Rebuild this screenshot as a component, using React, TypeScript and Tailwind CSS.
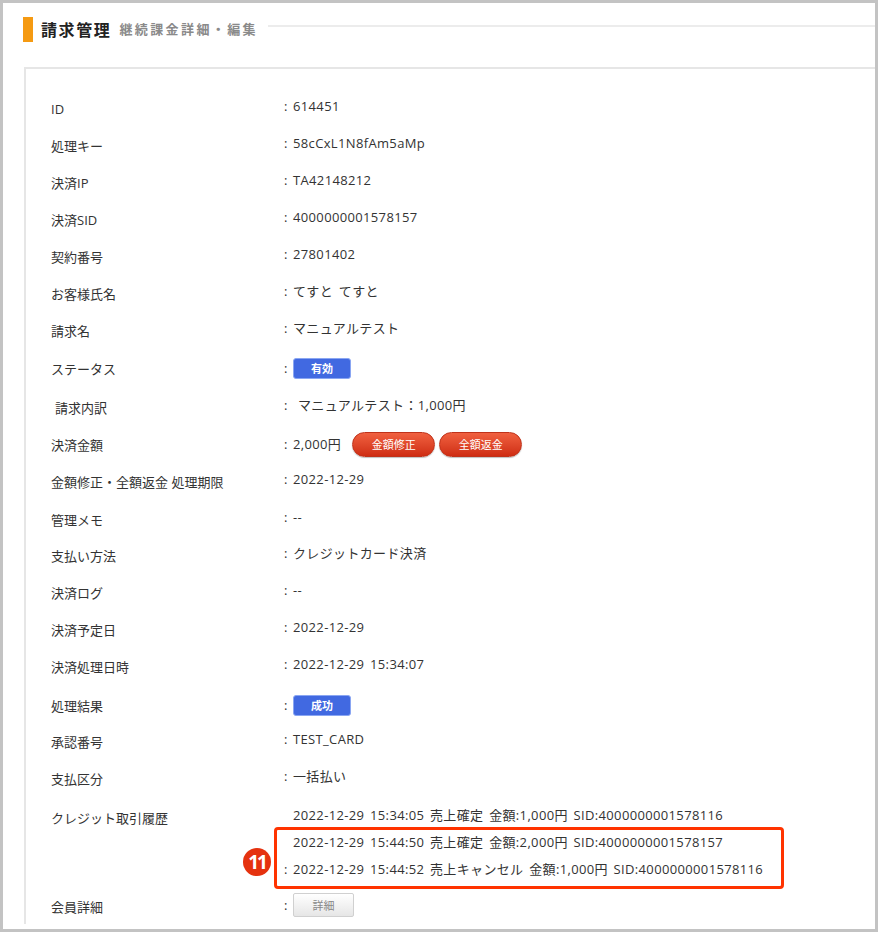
import React from "react";

/* =========================
   Types
========================= */

type RowProps = {
  label: string;
  children: React.ReactNode;
  rowClass?: string;
  labelClass?: string;
};

/* =========================
   Small parts
========================= */

function Row({
  label,
  children,
  rowClass = "pt-[10px] pb-[7px]",
  labelClass = "pt-[3px]",
}: RowProps) {
  return (
    <div className={`flex items-start ${rowClass}`}>
      <div className={`w-[233px] shrink-0 leading-[17px] ${labelClass}`}>
        {label}
      </div>
      <div className="flex-1 leading-[17px] tracking-[0.35px] [word-spacing:2px]">
        {children}
      </div>
    </div>
  );
}

function Colon() {
  return <span className="inline-block w-[9px]">:</span>;
}

function Text({ children }: { children: React.ReactNode }) {
  return (
    <div className="flex">
      <Colon />
      <span>{children}</span>
    </div>
  );
}

function BlueBadge({ children }: { children: React.ReactNode }) {
  return (
    <div className="flex items-center">
      <Colon />
      <span className="inline-flex h-[21px] w-[58px] items-center justify-center rounded-[3px] border border-[#8aa6f2] bg-[#4169e1] text-[11px] font-bold tracking-normal text-white">
        {children}
      </span>
    </div>
  );
}

function RedButton({ children }: { children: React.ReactNode }) {
  return (
    <span className="inline-flex h-[25px] w-[83px] items-center justify-center rounded-full border border-[#c0321a] bg-gradient-to-b from-[#f0603f] to-[#cf2c12] text-[11px] tracking-normal text-white shadow-[0_1px_1px_rgba(0,0,0,0.25)]">
      {children}
    </span>
  );
}

/* =========================
   Data
========================= */

const history = [
  "2022-12-29 15:34:05 売上確定 金額:1,000円 SID:4000000001578116",
  "2022-12-29 15:44:50 売上確定 金額:2,000円 SID:4000000001578157",
  "2022-12-29 15:44:52 売上キャンセル 金額:1,000円 SID:4000000001578116",
];

/* =========================
   Component
========================= */

export default function App() {
  return (
    <div
      className="relative h-[932px] w-[878px] overflow-hidden border-[3px] border-[#c3c3c3] bg-white text-[13px] text-[#333]"
      style={{ fontFamily: '"Open Sans", "Noto Sans CJK JP", sans-serif' }}
    >
      {/* Header */}
      <div className="flex items-center pl-[20px] pt-[14px]">
        <div className="h-[25px] w-[10px] bg-[#f59a12]" />
        <div className="ml-[8px] text-[16px] font-bold tracking-[1.6px] text-[#222]">
          請求管理
        </div>
        <div className="ml-[8px] text-[13px] font-bold tracking-[2.4px] text-[#8a8a8a]">
          継続課金詳細・編集
        </div>
        <div className="mb-[7px] ml-[10px] h-[2px] flex-1 bg-[#ececec]" />
      </div>

      {/* Card */}
      <div className="ml-[21px] mt-[25px] w-[900px] border-l-2 border-t-2 border-[#e6e6e6] pl-[25px] pt-[19px]">
        <Row label="ID">
          <Text>614451</Text>
        </Row>
        <Row label="処理キー">
          <Text>58cCxL1N8fAm5aMp</Text>
        </Row>
        <Row label="決済IP">
          <Text>TA42148212</Text>
        </Row>
        <Row label="決済SID">
          <Text>4000000001578157</Text>
        </Row>
        <Row label="契約番号">
          <Text>27801402</Text>
        </Row>
        <Row label="お客様氏名">
          <Text>てすと てすと</Text>
        </Row>
        <Row label="請求名" rowClass="pt-[10px] pb-[8px]">
          <Text>マニュアルテスト</Text>
        </Row>
        <Row label="ステータス" rowClass="pt-[10px] pb-[8px]">
          <BlueBadge>有効</BlueBadge>
        </Row>
        <Row label="請求内訳" labelClass="pt-[3px] pl-[4px]">
          <div className="flex">
            <span className="inline-block w-[14px]">:</span>
            <span>マニュアルテスト：1,000円</span>
          </div>
        </Row>
        <Row
          label="決済金額"
          rowClass="pt-[8px] pb-[4px]"
          labelClass="pt-[5px]"
        >
          <div className="flex items-center">
            <Colon />
            <span className="mr-[11px]">2,000円</span>
            <div className="flex gap-[4px]">
              <RedButton>金額修正</RedButton>
              <RedButton>全額返金</RedButton>
            </div>
          </div>
        </Row>
        <Row label="金額修正・全額返金 処理期限" rowClass="pt-[10px] pb-[8px]">
          <Text>2022-12-29</Text>
        </Row>
        <Row label="管理メモ" rowClass="pt-[10px] pb-[6px]">
          <Text>--</Text>
        </Row>
        <Row label="支払い方法">
          <Text>クレジットカード決済</Text>
        </Row>
        <Row label="決済ログ">
          <Text>--</Text>
        </Row>
        <Row label="決済予定日">
          <Text>2022-12-29</Text>
        </Row>
        <Row label="決済処理日時" rowClass="pt-[10px] pb-[9px]">
          <Text>2022-12-29 15:34:07</Text>
        </Row>
        <Row label="処理結果" rowClass="pt-[10px] pb-[5px]">
          <BlueBadge>成功</BlueBadge>
        </Row>
        <Row label="承認番号">
          <Text>TEST_CARD</Text>
        </Row>
        <Row label="支払区分" rowClass="pt-[10px] pb-[9px]">
          <Text>一括払い</Text>
        </Row>
        <Row label="クレジット取引履歴" rowClass="pt-[10px] pb-[8px]">
          <div className="flex flex-col gap-[10px]">
            {history.map((h, i) => (
              <div key={i} className="flex">
                <span
                  className={`inline-block w-[9px] ${
                    i === history.length - 1 ? "" : "invisible"
                  }`}
                >
                  :
                </span>
                <span>{h}</span>
              </div>
            ))}
          </div>
        </Row>
        <Row label="会員詳細" rowClass="pt-[7px] pb-[7px]" labelClass="pt-[6px]">
          <div className="flex items-center">
            <Colon />
            <span className="inline-flex h-[24px] w-[61px] items-center justify-center rounded-[2px] border border-[#d0d0d0] bg-gradient-to-b from-white to-[#e6e6e6] text-[11px] tracking-normal text-[#888]">
              詳細
            </span>
          </div>
        </Row>
      </div>

      {/* Annotation overlay */}
      <div className="absolute left-[271px] top-[824px] h-[62px] w-[510px] rounded-[4px] border-[3px] border-[#ff3300]" />
      <div className="absolute left-[240px] top-[845px] flex h-[28px] w-[28px] items-center justify-center rounded-full bg-[#e5320f] text-[19px] font-bold leading-none tracking-[-2px] text-white">
        11
      </div>
    </div>
  );
}
